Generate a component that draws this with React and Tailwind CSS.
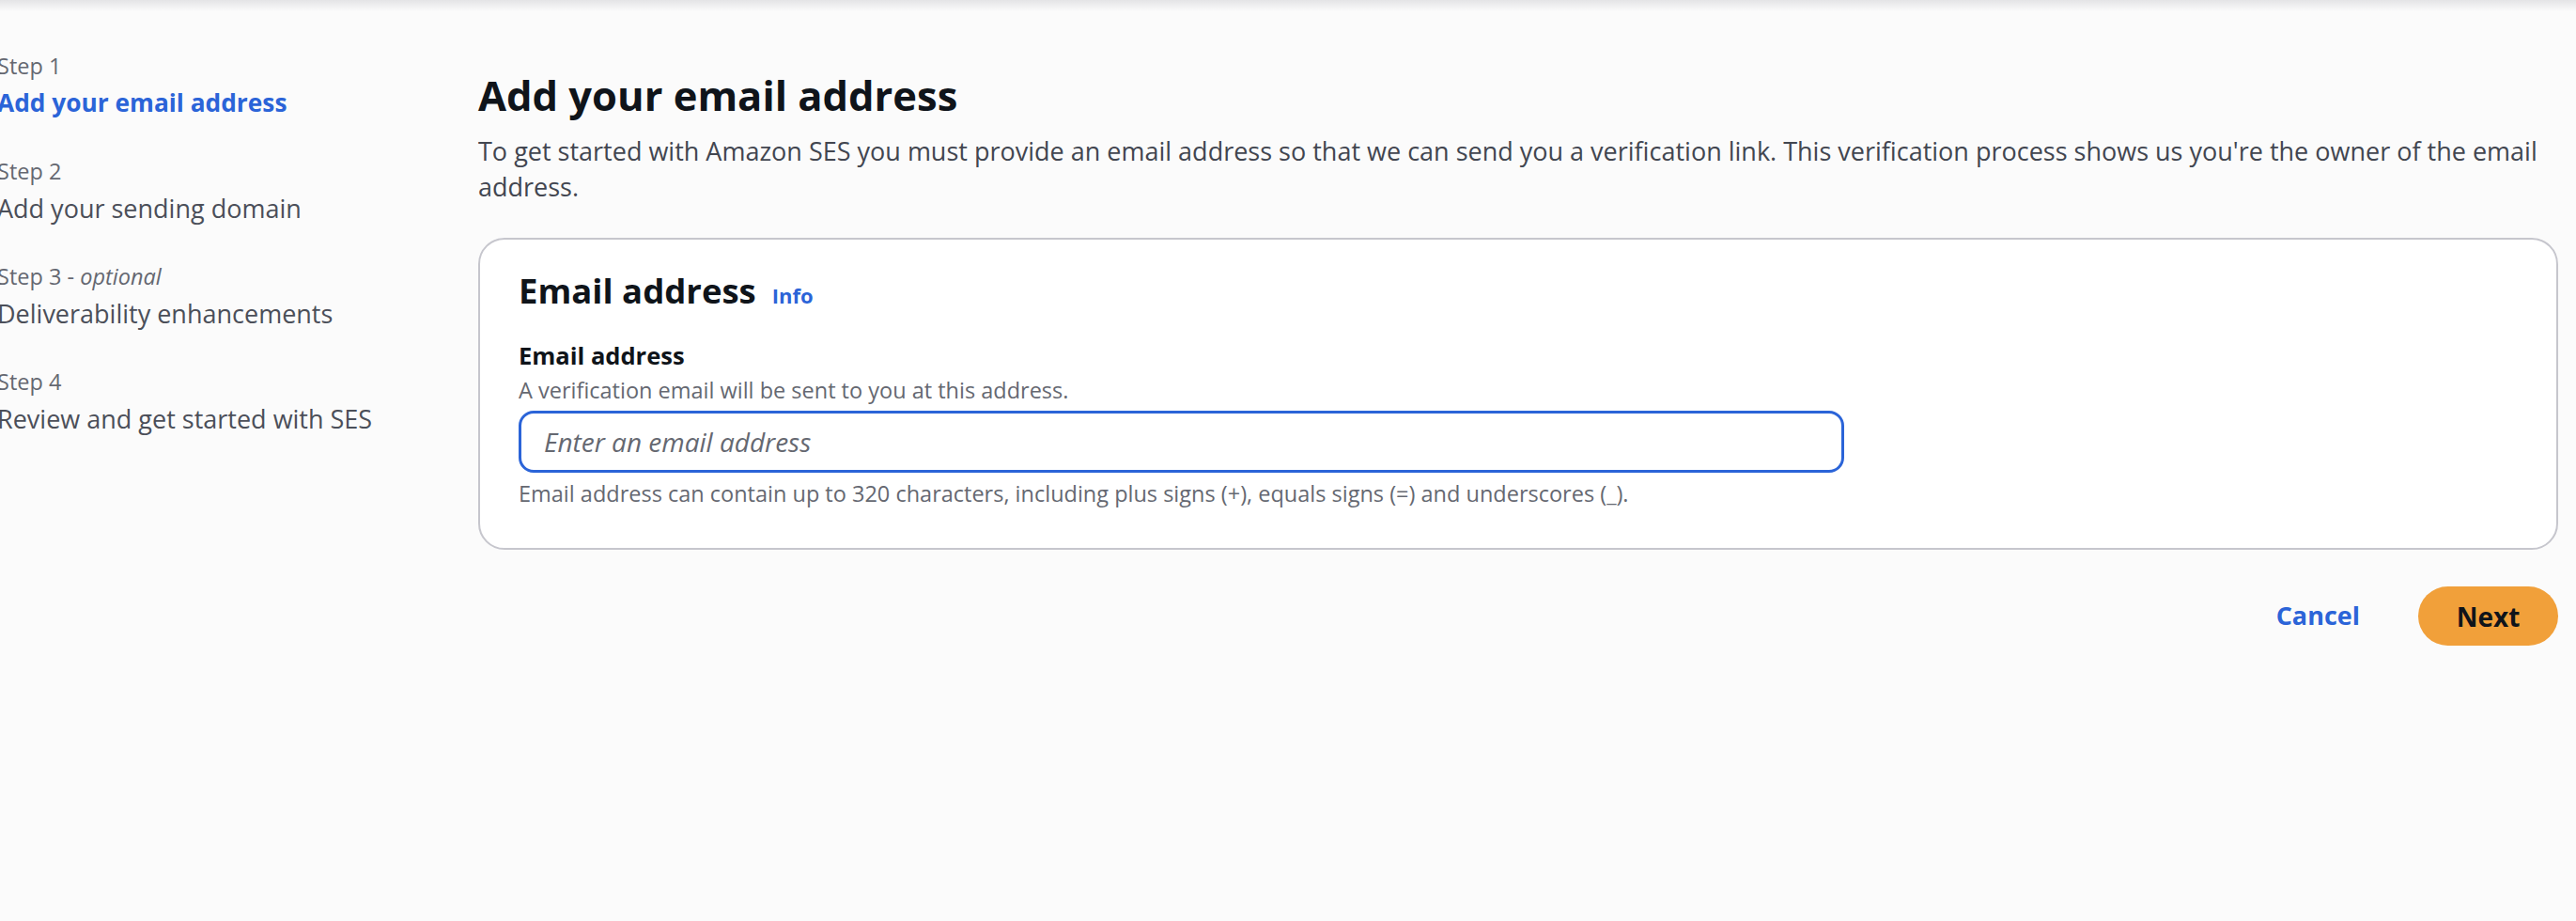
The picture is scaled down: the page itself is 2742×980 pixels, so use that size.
import React from 'react';

const steps = [
  { label: 'Step 1', title: 'Add your email address', active: true },
  { label: 'Step 2', title: 'Add your sending domain' },
  { label: 'Step 3', optional: true, title: 'Deliverability enhancements' },
  { label: 'Step 4', title: 'Review and get started with SES' },
];

function StepNav() {
  return (
    <nav className="w-[512px] shrink-0 pt-[43px] flex flex-col gap-[40px]">
      {steps.map((s) => (
        <div key={s.label} className="flex flex-col gap-[7px]">
          <span className="text-[23.5px] leading-[30px] text-[#656871]">
            {s.label}
            {s.optional && (
              <>
                {' - '}
                <i>optional</i>
              </>
            )}
          </span>
          <span
            className={
              s.active
                ? 'text-[26.3px] leading-[35px] font-bold text-[#2b64d8]'
                : 'text-[27px] leading-[35px] text-[#4b4f59]'
            }
          >
            {s.title}
          </span>
        </div>
      ))}
    </nav>
  );
}

export default function App() {
  return (
    <div className="min-h-[980px] bg-[#fbfbfb] font-['Open_Sans',sans-serif] text-[#0f141a] overflow-hidden">
      <div className="h-[12px] bg-linear-to-b from-[#e4e4e6] to-[#fbfbfb]" />
      <div className="flex -ml-[3px]">
        <StepNav />

        <main className="flex-1 pr-[19px] pt-[64px]">
          <h1 className="text-[43.5px] leading-[52px] font-bold">Add your email address</h1>
          <p className="mt-[14px] text-[27px] leading-[38px] text-[#424650]">
            To get started with Amazon SES you must provide an email address so that we can send you a verification
            link. This verification process shows us you're the owner of the email address.
          </p>

          <section className="mt-[35px] bg-white border-2 border-[#c6c6cd] rounded-[28px] px-[41px] pt-[32px] pb-[43px]">
            <div className="flex items-baseline gap-[17px]">
              <h2 className="text-[36.5px] leading-[44px] font-bold">Email address</h2>
              <a href="#" className="text-[22px] font-bold text-[#2b64d8]">
                Info
              </a>
            </div>

            <label className="block mt-[30px] text-[25.5px] leading-[35px] font-bold">Email address</label>
            <p className="mt-[4px] text-[23.5px] leading-[30px] text-[#656871]">
              A verification email will be sent to you at this address.
            </p>
            <input
              type="email"
              placeholder="Enter an email address"
              className="mt-[7px] block w-[1411px] h-[66px] px-[24px] bg-white border-[3.5px] border-[#2b64d8] rounded-[16px] text-[28px] outline-none placeholder:italic placeholder:text-[#656871]"
            />
            <p className="mt-[7px] text-[23.5px] leading-[30px] text-[#656871]">
              Email address can contain up to 320 characters, including plus signs (+), equals signs (=) and
              underscores (_).
            </p>
          </section>

          <div className="mt-[39px] flex justify-end items-center gap-[28px]">
            <button type="button" className="px-[34px] h-[63px] text-[27px] font-bold text-[#2b64d8]">
              Cancel
            </button>
            <button
              type="button"
              className="w-[149px] h-[63px] rounded-full bg-[#f1a03a] text-[28px] font-bold text-[#0f141a]"
            >
              Next
            </button>
          </div>
        </main>
      </div>
    </div>
  );
}
